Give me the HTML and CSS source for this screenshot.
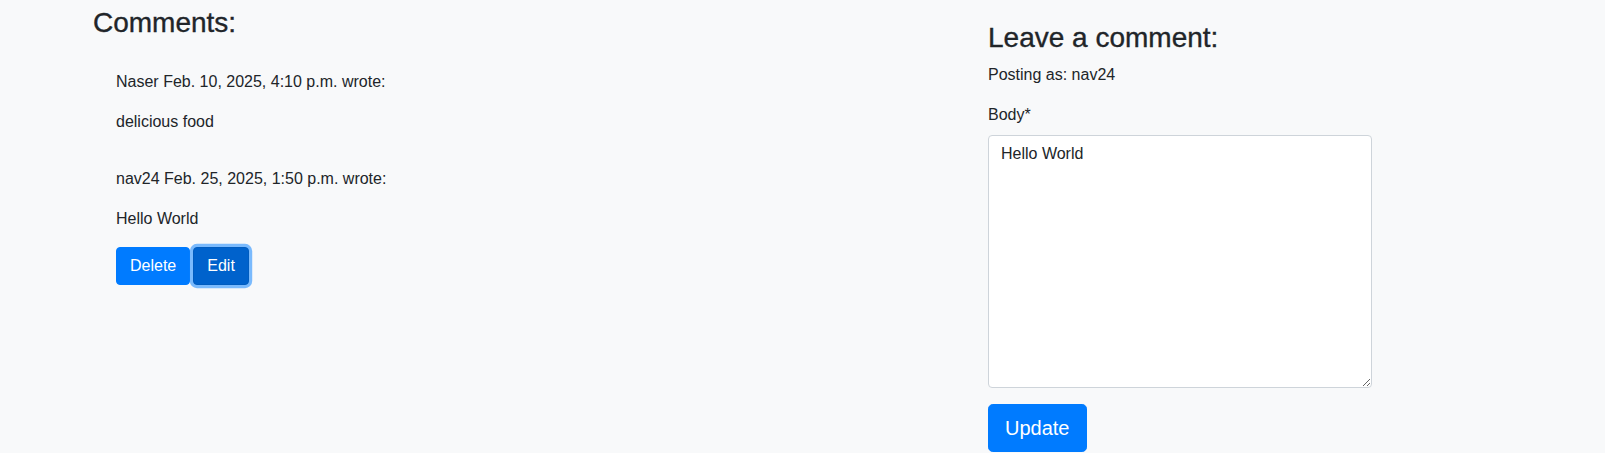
FILE: index.html
```html
<!DOCTYPE html>
<html lang="en">
<head>
<meta charset="utf-8">
<title>Comments</title>
<link rel="stylesheet" href="styles.css">
</head>
<body>
<div class="page">
  <section class="comments-col">
    <h3 class="heading">Comments:</h3>
    <div class="comment-list">
      <div class="comment">
        <p class="meta">Naser Feb. 10, 2025, 4:10 p.m. wrote:</p>
        <p class="text">delicious food</p>
      </div>
      <div class="comment">
        <p class="meta">nav24 Feb. 25, 2025, 1:50 p.m. wrote:</p>
        <p class="text">Hello World</p>
        <div class="actions">
          <button class="btn btn-primary btn-sm-pad" type="button">Delete</button>
          <button class="btn btn-primary btn-sm-pad btn-active" type="button">Edit</button>
        </div>
      </div>
    </div>
  </section>
  <section class="form-col">
    <h3 class="heading form-heading">Leave a comment:</h3>
    <p class="posting">Posting as: nav24</p>
    <form class="comment-form">
      <div class="form-group">
        <label class="label" for="body">Body*</label>
        <textarea id="body" class="textarea">Hello World</textarea>
      </div>
      <button class="btn btn-primary btn-lg" type="button">Update</button>
    </form>
  </section>
</div>
</body>
</html>
```
FILE: styles.css
```css
* { box-sizing: border-box; }
html, body { margin: 0; padding: 0; }
body {
  background: #f8f9fa;
  color: #212529;
  font-family: "Liberation Sans", Arial, sans-serif;
  font-size: 16px;
  line-height: 24px;
  width: 1605px;
  height: 453px;
  overflow: hidden;
}
.page {
  display: flex;
  padding-left: 93px;
}
.comments-col {
  width: 895px;
  padding-top: 5.5px;
}
.form-col {
  width: 384px;
  padding-top: 20.5px;
}
.heading {
  margin: 0 0 8px;
  font-size: 28px;
  line-height: 1.2;
  font-weight: 500;
  -webkit-text-stroke: 0.35px #212529;
}
.form-heading {
  margin-bottom: 9px;
}
.comment-list {
  display: flex;
  flex-direction: column;
  gap: 17px;
  padding-top: 23px;
  padding-left: 23px;
}
.comment p {
  margin: 0 0 16px;
}
.actions {
  display: flex;
  gap: 3px;
}
.btn {
  display: inline-block;
  font-family: inherit;
  font-size: 16px;
  line-height: 24px;
  padding: 6px 12px;
  border: 1px solid transparent;
  border-radius: 4px;
  cursor: pointer;
}
.btn-sm-pad {
  padding: 6px 13px;
}
.btn-primary {
  background: #007bff;
  border-color: #007bff;
  color: #fff;
}
.btn-active {
  background: #0062cc;
  border-color: #005cbf;
  box-shadow: 0 0 0 3.2px rgba(38, 143, 255, 0.6);
}
.btn-lg {
  font-size: 20px;
  line-height: 30px;
  padding: 8px 16px;
  border-radius: 4.8px;
}
.posting {
  margin: 0 0 16px;
}
.form-group {
  margin-bottom: 16px;
}
.label {
  display: block;
  margin-bottom: 8px;
}
.textarea {
  display: block;
  width: 384px;
  height: 253px;
  padding: 6px 12px;
  border: 1px solid #ced4da;
  border-radius: 4px;
  background: #fff;
  color: #212529;
  font-family: inherit;
  font-size: 16px;
  line-height: 24px;
  resize: vertical;
  margin: 0;
}
.comment-form { margin: 0; }
```
